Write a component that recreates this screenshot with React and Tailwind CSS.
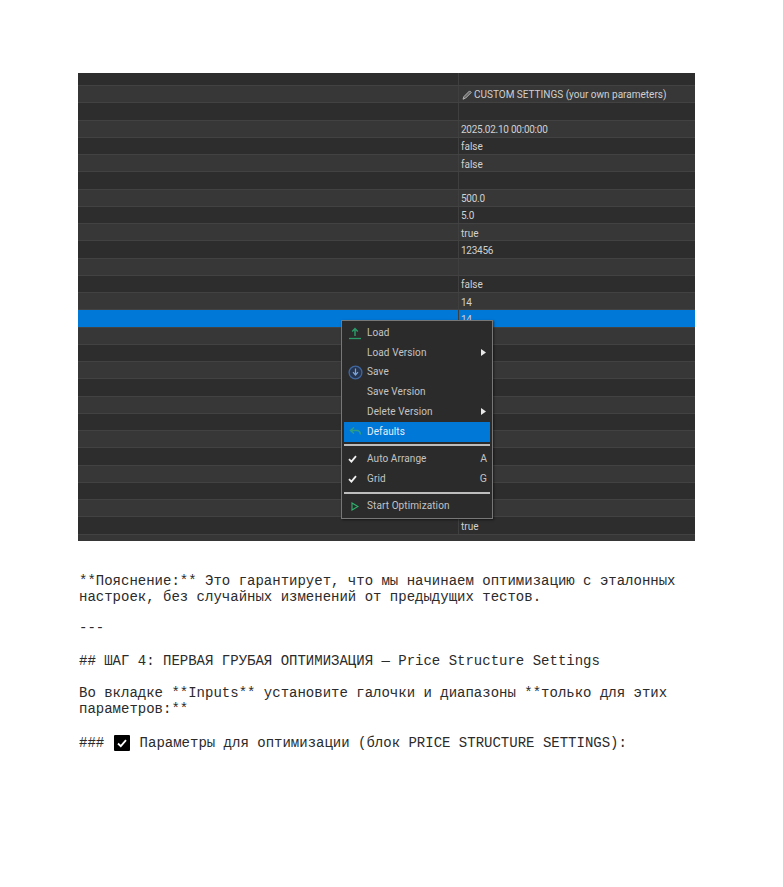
const values = [
  "", "CUSTOM", "", "2025.02.10 00:00:00", "false", "false", "", "500.0", "5.0", "true", "123456", "",
  "false", "14", "14", "", "", "", "", "", "", "", "", "", "", "", "true",
];

function Row({ i, v }) {
  const selected = i === 14;
  const light = i % 2 === 0;
  let bg = light ? "bg-[#2d2d2d]" : "bg-[#373737]";
  if (selected) bg = "bg-[#0078d7]";
  const h = i === 0 ? "h-[13px]" : "h-[17.25px]";
  const numeric = /^[0-9.: ]+$/.test(v);
  return (
    <div className={`flex shrink-0 ${h} ${bg} border-b border-[#424242]`}>
      <div className="w-[380px] shrink-0" />
      <div className={`flex-1 flex items-center pl-[2px] pt-[3px] border-l border-[#3f3f3f] text-[#d0d0d0] text-[10px] leading-none overflow-visible whitespace-nowrap ${numeric ? "tracking-[-0.25px]" : ""}`}>
        {v === "CUSTOM" ? (
          <span className="flex items-center gap-[1px] -mt-[1px]">
            <svg width="12" height="12" viewBox="0 0 12 12" fill="none">
              <path d="M2 10.2 L3 7.5 L8.6 1.9 L10.2 3.5 L4.6 9.1 Z" stroke="#b5b5b5" strokeWidth="1" fill="#666666" />
            </svg>
            CUSTOM SETTINGS (your own parameters)
          </span>
        ) : (
          v
        )}
      </div>
    </div>
  );
}

function Item({ icon, label, arrow, hint, active }) {
  return (
    <div className={`flex items-center h-[19.75px] pr-[3px] ${active ? "bg-[#0078d7] text-[#e4eff9]" : "text-[#c4c4c4]"}`}>
      <div className="w-[23px] pr-[1px] flex justify-center shrink-0">{icon}</div>
      <span className="flex-1 text-[10px] tracking-[0.1px] leading-none">{label}</span>
      {arrow && (
        <svg width="5" height="7" viewBox="0 0 5 7" className="mr-[1px]">
          <path d="M0 0 L5 3.5 L0 7 Z" fill="#e8e8e8" />
        </svg>
      )}
      {hint && <span className="text-[10.5px] leading-none">{hint}</span>}
    </div>
  );
}

const Check = () => (
  <svg width="9" height="8" viewBox="0 0 9 8" fill="none" className="mr-[6px]">
    <path d="M1 4.2 L3.4 6.6 L8 1.2" stroke="#f0f0f0" strokeWidth="1.8" />
  </svg>
);

function Menu() {
  return (
    <div className="absolute left-[263px] top-[247px] w-[152px] h-[198.5px] bg-[#2b2b2b] border border-[#777777] pt-[2px] px-[2px] [font-family:Roboto,sans-serif] shadow-[1px_1px_2px_rgba(0,0,0,0.5)]">
      <Item
        label="Load"
        icon={
          <svg width="14" height="14" viewBox="0 0 14 14" fill="none">
            <path d="M7 10 V3 M4.2 5.6 L7 2.6 L9.8 5.6" stroke="#2a9a68" strokeWidth="1.5" />
            <path d="M1 12.5 H13" stroke="#2a9a68" strokeWidth="1.3" />
          </svg>
        }
      />
      <Item label="Load Version" arrow />
      <Item
        label="Save"
        icon={
          <svg width="15" height="15" viewBox="0 0 15 15" fill="none">
            <circle cx="7.5" cy="7.5" r="6.4" fill="#263652" stroke="#41679f" strokeWidth="1.3" />
            <path d="M7.5 3.5 V9.5 M5 7.2 L7.5 10 L10 7.2" stroke="#7fa4d8" strokeWidth="1.2" />
          </svg>
        }
      />
      <Item label="Save Version" />
      <Item label="Delete Version" arrow />
      <Item
        active
        label="Defaults"
        icon={
          <svg width="13" height="11" viewBox="0 0 13 11" fill="none">
            <path d="M5 1.5 L1.5 4.5 L5 7.5 M2 4.5 H8 Q11 4.5 11.5 8.5" stroke="#2b9d88" strokeWidth="1.5" />
          </svg>
        }
      />
      <div className="h-[2px] bg-[#bdbdbd] mt-[2px] mb-[4px]" />
      <Item label="Auto Arrange" hint="A" icon={<Check />} />
      <Item label="Grid" hint="G" icon={<Check />} />
      <div className="h-[2px] bg-[#bdbdbd] mt-[2.5px] mb-[3px]" />
      <Item
        label="Start Optimization"
        icon={
          <svg width="8" height="9" viewBox="0 0 8 9" fill="none">
            <path d="M1 1 L7 4.5 L1 8 Z" stroke="#2fb56f" strokeWidth="1.1" />
          </svg>
        }
      />
    </div>
  );
}

export default function App() {
  return (
    <div className="h-[887px] bg-white pt-[73px] pl-[78px] overflow-hidden">
      <div className="relative w-[617px] h-[468px] overflow-hidden [font-family:Roboto,sans-serif] bg-[#363636]">
        {values.map((v, i) => (
          <Row key={i} i={i} v={v} />
        ))}
        <Menu />
      </div>
      <div className="mt-[32px] pl-[1px] text-[14px] leading-[16px] text-[#2b2b2b] [font-family:'Liberation_Mono',monospace] whitespace-pre">
        <p>**Пояснение:** Это гарантирует, что мы начинаем оптимизацию с эталонных</p>
        <p>настроек, без случайных изменений от предыдущих тестов.</p>
        <p className="mt-[15px]">---</p>
        <p className="mt-[17px]">## ШАГ 4: ПЕРВАЯ ГРУБАЯ ОПТИМИЗАЦИЯ — Price Structure Settings</p>
        <p className="mt-[16px]">Во вкладке **Inputs** установите галочки и диапазоны **только для этих</p>
        <p>параметров:**</p>
        <p className="mt-[18px] flex items-center">
          <span>### </span>
          <span className="inline-flex items-center justify-center w-[16px] h-[16px] ml-[1px] bg-black rounded-[1px] mr-[10px]">
            <svg width="10" height="9" viewBox="0 0 10 9" fill="none">
              <path d="M1 4.5 L3.8 7.2 L9 1.2" stroke="#ffffff" strokeWidth="1.8" />
            </svg>
          </span>
          <span>Параметры для оптимизации (блок PRICE STRUCTURE SETTINGS):</span>
        </p>
      </div>
    </div>
  );
}
